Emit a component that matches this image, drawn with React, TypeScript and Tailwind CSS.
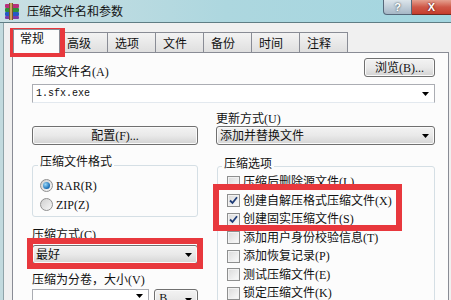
import React from 'react';

const tabs = ['高级', '选项', '文件', '备份', '时间', '注释'];

const options: { label: string; checked: boolean }[] = [
  { label: '压缩后删除源文件(L)', checked: false },
  { label: '创建自解压格式压缩文件(X)', checked: true },
  { label: '创建固实压缩文件(S)', checked: true },
  { label: '添加用户身份校验信息(T)', checked: false },
  { label: '添加恢复记录(P)', checked: false },
  { label: '测试压缩文件(E)', checked: false },
  { label: '锁定压缩文件(K)', checked: false },
];

function Arrow() {
  return (
    <svg width="7" height="4" viewBox="0 0 7 4">
      <path d="M0 0h7L3.5 4z" fill="#000" />
    </svg>
  );
}

function WinButton({ children, className }: { children: React.ReactNode; className: string }) {
  return (
    <div
      className={
        'flex items-center justify-center rounded-[3px] border border-[#707070] bg-linear-to-b from-[#f3f3f3] via-[#e9e9e9] to-[#d3d3d3] shadow-[inset_0_0_0_1px_#fafafa] ' +
        className
      }
    >
      {children}
    </div>
  );
}

function Combo({ text, className }: { text: string; className: string }) {
  return (
    <div
      className={
        'flex rounded-[3px] border border-[#707070] bg-linear-to-b from-[#f3f3f3] via-[#e9e9e9] to-[#d5d5d5] pl-[3px] shadow-[inset_0_0_0_1px_#fafafa] ' +
        className
      }
    >
      <span className="flex-1 leading-[14px]">{text}</span>
      <span className="flex w-[17px] items-center justify-center self-stretch">
        <Arrow />
      </span>
    </div>
  );
}

function Radio({ on }: { on: boolean }) {
  return (
    <span className="flex h-[13px] w-[13px] items-center justify-center rounded-full border border-[#8f8f8f] bg-linear-to-br from-[#cfcfcf] to-[#f7f7f7]">
      {on && (
        <span className="h-[7px] w-[7px] rounded-full bg-[radial-gradient(circle_at_35%_35%,#9ad8f8,#1f72b8_65%,#0e4c88)]" />
      )}
    </span>
  );
}

function Check({ checked }: { checked: boolean }) {
  return (
    <span className="flex h-[13px] w-[13px] items-center justify-center border border-[#8e8f8f] bg-linear-to-br from-[#dadada] to-[#fbfbfb] shadow-[inset_0_0_0_1px_#f2f2f2]">
      {checked && (
        <svg width="9" height="9" viewBox="0 0 9 9">
          <path d="M1 4.5L3.5 7L8 1.2" fill="none" stroke="#1f3d78" strokeWidth="1.8" />
        </svg>
      )}
    </span>
  );
}

function RarIcon() {
  return (
    <svg width="16" height="17" viewBox="0 0 16 17">
      <rect x="1" y="1" width="14" height="4" rx="1" fill="#b8307c" />
      <rect x="1" y="5" width="14" height="4" rx="1" fill="#2f8f3a" />
      <rect x="1" y="9" width="14" height="4" rx="1" fill="#2659c4" />
      <rect x="1" y="13" width="14" height="3" rx="1" fill="#7b3aa8" />
      <rect x="5" y="0" width="4" height="17" fill="#caa266" />
      <rect x="5" y="0" width="1" height="17" fill="#7a5a2a" />
      <rect x="8" y="0" width="1" height="17" fill="#7a5a2a" />
    </svg>
  );
}

export default function App() {
  return (
    <div className="relative h-[300px] w-[451px] overflow-hidden bg-[#f0f0f0] font-['Liberation_Serif','Noto_Sans_CJK_SC',serif] text-[12px] text-[#111]">
      {/* caption */}
      <div className="flex h-[23px] items-center border-b border-[#5f7d84] bg-linear-to-r from-[#cadfe3] via-[#add7df] to-[#a3d6e0]">
        <span className="ml-[4px] flex">
          <RarIcon />
        </span>
        <span className="ml-[7px] font-['Noto_Sans_CJK_SC',sans-serif] leading-[14px]">压缩文件名和参数</span>
        <div className="ml-auto flex self-start">
          <div className="flex h-[15px] w-[29px] items-center justify-center rounded-bl-[4px] border border-t-0 border-[#56687a] bg-linear-to-b from-[#dce5eb] to-[#a6b7c6] font-['Liberation_Sans',sans-serif] text-[11px] font-bold leading-none text-white [text-shadow:0_0_2px_#233]">
            ?
          </div>
          <div className="flex h-[15px] w-[39px] items-center justify-center border-b border-[#6e2a22] bg-linear-to-b from-[#e4a090] via-[#cf5848] to-[#c63c2c] font-['Liberation_Sans',sans-serif] text-[11px] font-bold leading-none text-white [text-shadow:0_0_2px_#400]">
            X
          </div>
        </div>
      </div>

      <div className="flex">
        <div className="h-[280px] w-[4px] border-r border-[#8fa4a9] bg-[#c2dade]" />
        <div className="flex-1 pl-[8px] pr-[2px]">
          {/* tabs */}
          <div className="mt-[6px] flex items-end pl-[1px]">
            <div className="relative z-10 -mb-px flex h-[24px] w-[47px] items-start border border-b-0 border-[#898c95] bg-[#fcfcfc] pl-[6px] pt-[1px] font-['Noto_Sans_CJK_SC',sans-serif] leading-[14px]">
              常规
            </div>
            {tabs.map((t) => (
              <div
                key={t}
                className="flex h-[20px] w-[48px] items-center border-t border-r border-[#898c95] bg-linear-to-b from-[#f3f3f3] to-[#dfdfdf] pl-[7px] font-['Noto_Sans_CJK_SC',sans-serif] leading-[14px]"
              >
                {t}
              </div>
            ))}
          </div>

          {/* panel */}
          <div className="h-[260px] border border-[#898c95] bg-[#fcfcfc] pl-[19px] pr-[13px] pt-[5px]">
            <div className="flex justify-between">
              <span className="pt-[7px] leading-[14px]">压缩文件名(A)</span>
              <WinButton className="h-[19px] w-[71px] leading-[14px]">浏览(B)...</WinButton>
            </div>
            <div className="mt-[5px] flex h-[19px] items-center border border-[#abadb3] border-b-[#e3e9ef] bg-white pl-[3px]">
              <span className="flex-1 font-['Liberation_Mono',monospace] text-[10px] leading-[14px]">1.sfx.exe</span>
              <span className="flex w-[17px] justify-center">
                <Arrow />
              </span>
            </div>

            <div className="mt-[9px] grid grid-cols-[166px_1fr] gap-x-[18px]">
              <div className="flex flex-col justify-end">
                <WinButton className="h-[19px] leading-[14px]">配置(F)...</WinButton>
              </div>
              <div className="flex flex-col">
                <span className="leading-[14px]">更新方式(U)</span>
                <Combo text="添加并替换文件" className="h-[19px] items-center" />
              </div>
            </div>

            <div className="grid grid-cols-[166px_1fr] items-start gap-x-[18px]">
              <div className="mt-[10px] flex flex-col">
                <div className="relative z-10 ml-[6px] w-fit bg-[#fcfcfc] px-[2px] leading-[14px]">压缩文件格式</div>
                <div className="-mt-[4px] rounded-[3px] border border-[#d5dfe5] pb-[2px] pl-[7px] pt-[10px]">
                  <div className="flex h-[19px] items-center gap-[3px] leading-[14px]">
                    <Radio on />
                    RAR(R)
                  </div>
                  <div className="flex h-[19px] items-center gap-[3px] leading-[14px]">
                    <Radio on={false} />
                    ZIP(Z)
                  </div>
                </div>
                <span className="mt-[11px] leading-[14px]">压缩方式(C)</span>
                <Combo text="最好" className="mt-[3px] h-[19px] items-center" />
                <span className="mt-[9px] leading-[14px]">压缩为分卷，大小(V)</span>
                <div className="mt-[2px] flex gap-[5px]">
                  <div className="flex h-[20px] w-[118px] items-start justify-end border border-[#abadb3] bg-white pt-[4px]">
                    <span className="flex w-[17px] justify-center">
                      <Arrow />
                    </span>
                  </div>
                  <Combo text="B" className="h-[20px] w-[44px] items-start pl-[4px] pt-[1px]" />
                </div>
              </div>

              <div className="mt-[12px] flex flex-col">
                <div className="relative z-10 ml-[6px] w-fit bg-[#fcfcfc] px-[2px] leading-[14px]">压缩选项</div>
                <div className="-mt-[5px] ml-px h-[160px] rounded-[3px] border border-[#d5dfe5] pl-[9px] pt-[6px]">
                  {options.map((o) => (
                    <div key={o.label} className="flex h-[18.5px] items-center gap-[3px] leading-[14px]">
                      <Check checked={o.checked} />
                      {o.label}
                    </div>
                  ))}
                </div>
              </div>
            </div>
          </div>
        </div>
      </div>

      {/* annotation boxes */}
      <div className="absolute left-[10px] top-[28px] h-[29px] w-[55px] border-[5px] border-[#e8383d]" />
      <div className="absolute left-[27px] top-[238px] h-[31px] w-[176px] border-[6px] border-[#e8383d]" />
      <div className="absolute left-[213px] top-[184px] h-[47px] w-[189px] border-[6px] border-[#e8383d]" />
    </div>
  );
}
